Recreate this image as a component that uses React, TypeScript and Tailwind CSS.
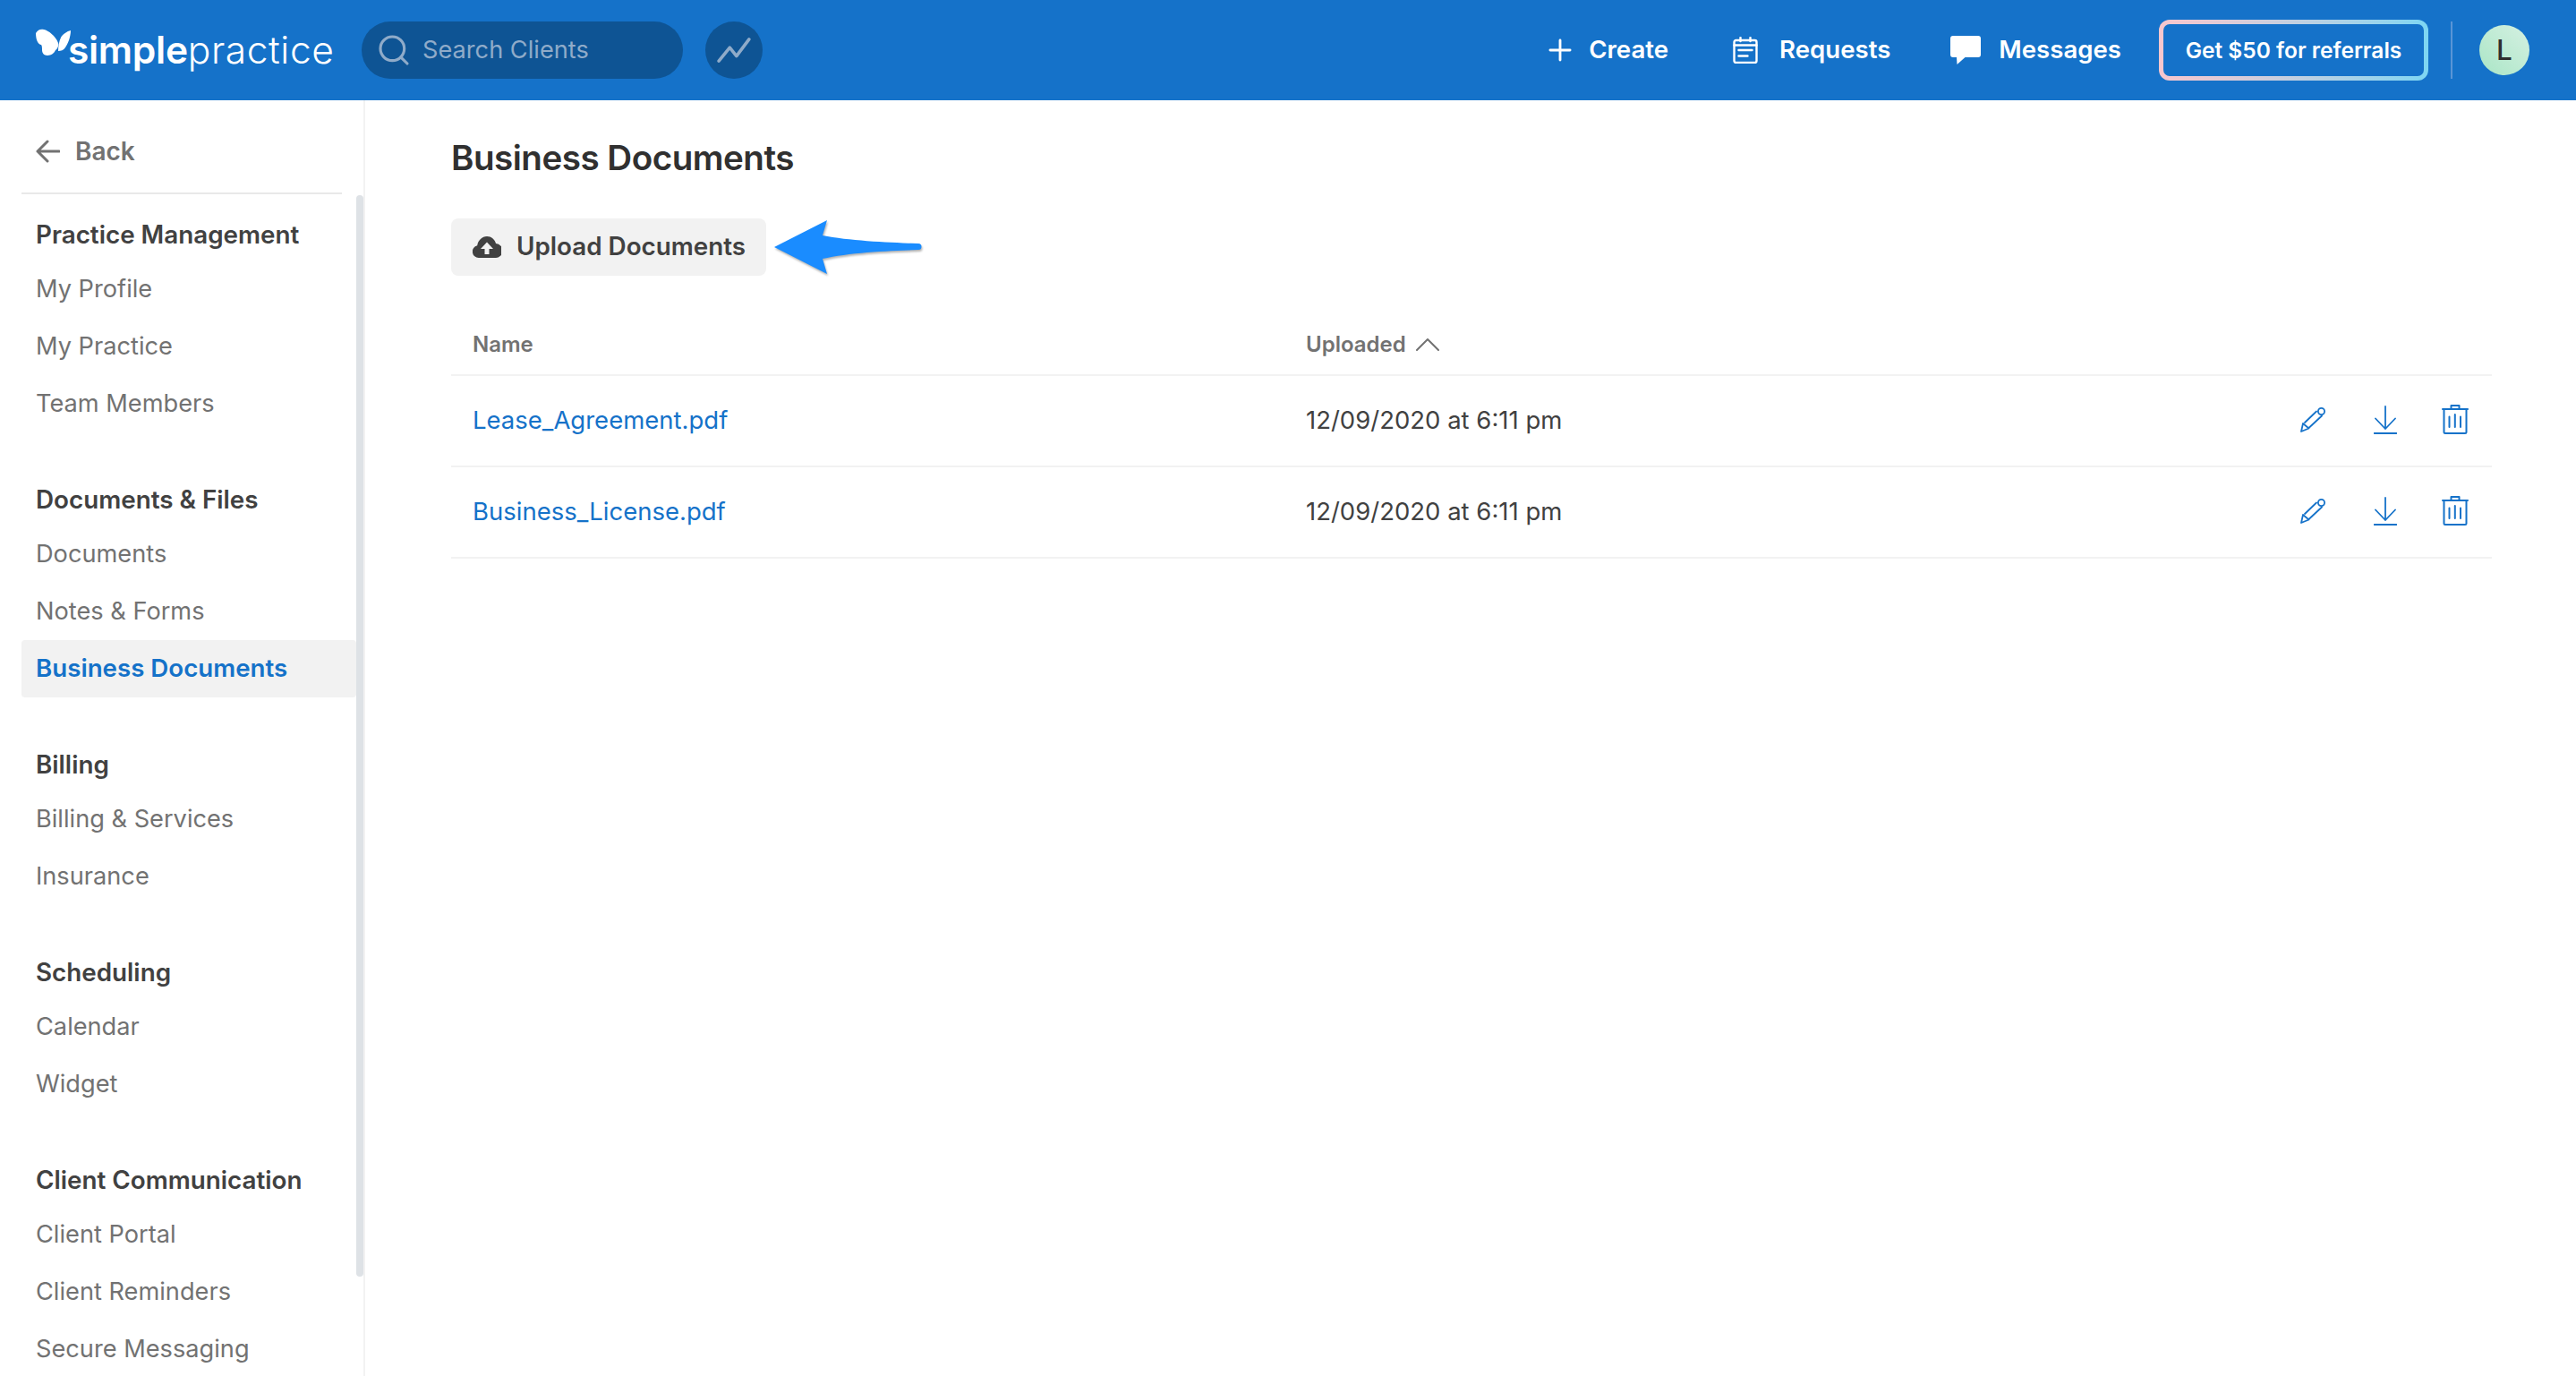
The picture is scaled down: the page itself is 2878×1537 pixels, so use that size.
import { Plus, Search } from "lucide-react";

const navGroups = [
  {
    title: "Practice Management",
    items: ["My Profile", "My Practice", "Team Members"],
  },
  {
    title: "Documents & Files",
    items: ["Documents", "Notes & Forms", "Business Documents"],
  },
  { title: "Billing", items: ["Billing & Services", "Insurance"] },
  { title: "Scheduling", items: ["Calendar", "Widget"] },
  {
    title: "Client Communication",
    items: ["Client Portal", "Client Reminders", "Secure Messaging"],
  },
];

const files = [
  { name: "Lease_Agreement.pdf", uploaded: "12/09/2020 at 6:11 pm" },
  { name: "Business_License.pdf", uploaded: "12/09/2020 at 6:11 pm" },
];

function Butterfly() {
  return (
    <svg viewBox="0 0 40 30" className="mt-[8px] w-[40px] h-[30px] shrink-0 fill-white">
      <path d="M0 5C2 1 6 0 9 1c5 1 13 7 16 15 1 3-1 7-3 8-1 3-5 6-9 6-4 0-6-3-6-6 0-2 0-5-1-6-3 0-6-5-6-13z" />
      <path d="M39 2c-4 1-9 4-11 8-2 4-3 10-3 15 3 0 6-1 8-4 3-4 6-12 6-19z" />
    </svg>
  );
}

function RequestsIcon() {
  return (
    <svg viewBox="0 0 28 30" className="w-[28px] h-[30px] fill-none stroke-white stroke-[2.4]" strokeLinecap="round">
      <rect x="1.500" y="4" width="25" height="25" rx="2" />
      <path d="M8.500 1v4M19.500 1v4M1.500 9.500h25M6.500 15h15M6.500 21.500h10" />
    </svg>
  );
}

function MessageIcon() {
  return (
    <svg viewBox="0 0 34 32" className="w-[34px] h-[32px] fill-white">
      <path d="M3 0h28a3 3 0 0 1 3 3v18a3 3 0 0 1-3 3H16.500L7.500 32l-.5-8H3a3 3 0 0 1-3-3V3a3 3 0 0 1 3-3z" />
    </svg>
  );
}

function TrendIcon() {
  return (
    <svg viewBox="0 0 40 32" className="w-[38px] h-[30px] fill-none stroke-[#8fabc9] stroke-[3.8]" strokeLinecap="round" strokeLinejoin="round">
      <path d="M2 29 15 13l8 10L38 3" />
    </svg>
  );
}

function BackArrow() {
  return (
    <svg viewBox="0 0 27 26" className="w-[27px] h-[26px] fill-none stroke-[#727272] stroke-[3]" strokeLinecap="round" strokeLinejoin="round">
      <path d="M26 13H2M13 2 2 13l11 11" />
    </svg>
  );
}

function SortChevron() {
  return (
    <svg viewBox="0 0 26 14" className="w-[26px] h-[14px] fill-none stroke-[#727272] stroke-[2]" strokeLinecap="round" strokeLinejoin="round">
      <path d="M1 13 13 1l12 12" />
    </svg>
  );
}

function CloudUpload() {
  return (
    <svg viewBox="0 0 32 24" className="w-[32px] h-[24px]">
      <path
        className="fill-[#414141]"
        d="M7 24a7 7 0 0 1-1.800-13.800C6.200 4.300 10.600 0 16 0c4.800 0 8.900 3.400 10 8a8 8 0 0 1-1 16z"
      />
      <path className="fill-[#f2f2f2]" d="M16 6.500 23 14h-4.500v6h-5v-6H9z" />
    </svg>
  );
}

function PencilIcon() {
  return (
    <svg viewBox="0 0 28 28" className="w-[28px] h-[28px] fill-none stroke-[#1572c9] stroke-[1.8]" strokeLinecap="round" strokeLinejoin="round">
      <circle cx="23.500" cy="4.500" r="3.600" />
      <path d="M5 17 18 4.500M10 22.500 24 9.500M1 27l2-9 6.500 5.500z" />
    </svg>
  );
}

function DownloadIcon() {
  return (
    <svg viewBox="0 0 26 32" className="w-[26px] h-[32px] fill-none stroke-[#1572c9] stroke-[1.8]" strokeLinecap="round" strokeLinejoin="round">
      <path d="M13 1v25M2 14.500l11 11.500 11-11.500M0.500 31h25" />
    </svg>
  );
}

function TrashIcon() {
  return (
    <svg viewBox="0 0 30 33" className="w-[30px] h-[33px] fill-none stroke-[#1572c9] stroke-[2]" strokeLinecap="round" strokeLinejoin="round">
      <path d="M1 5h28M2.500 5v25.500a1.500 1.500 0 0 0 1.500 1.500h22a1.500 1.500 0 0 0 1.500-1.500V5M10.500 5V1h9v4M8.500 13.500V25M14.800 11V25M21 13.500V25" />
    </svg>
  );
}

export default function App() {
  return (
    <div className="h-screen flex flex-col overflow-hidden bg-white font-['Inter',sans-serif] text-[#414141]">
      <header className="h-[112px] shrink-0 flex items-center bg-[#1572c9] pl-[40px] pr-[52px] text-white">
        <div className="w-[364px] flex items-start pb-[4px]">
          <Butterfly />
          <span className="-ml-[4px] mt-[4px] text-[42.5px] leading-[56px] tracking-[-0.3px]">
            <span className="font-semibold">simple</span>
            <span className="font-light tracking-[0.6px]">practice</span>
          </span>
        </div>
        <div className="w-[359px] h-[64px] flex items-center gap-[12px] pl-[16px] rounded-full bg-[#0e5494] text-[#8fabc9]">
          <Search size={40} strokeWidth={1.9} />
          <span className="text-[27.2px]">Search Clients</span>
        </div>
        <div className="ml-[25px] size-[64px] flex items-center justify-center rounded-full bg-[#0e5494]">
          <TrendIcon />
        </div>
        <nav className="ml-auto flex items-center text-[27.6px] font-semibold">
          <div className="flex items-center gap-[13px]">
            <Plus size={38} strokeWidth={1.8} />
            <span>Create</span>
          </div>
          <div className="ml-[72px] flex items-center gap-[24px]">
            <RequestsIcon />
            <span>Requests</span>
          </div>
          <div className="ml-[67px] flex items-center gap-[20px]">
            <MessageIcon />
            <span>Messages</span>
          </div>
          <div className="ml-[42px] w-[301px] h-[68px] p-[5px] rounded-[12px] bg-linear-to-r from-[#f8c6cd] to-[#7dd6f3]">
            <div className="h-full flex items-center justify-center rounded-[7px] bg-[#1572c9] text-[24.5px]">
              Get $50 for referrals
            </div>
          </div>
          <div className="ml-[25px] w-[2px] h-[64px] bg-[#5a95d6]" />
          <div className="ml-[30px] size-[56px] flex items-center justify-center rounded-full bg-linear-to-tr from-[#a9e6c6] to-[#d5f0e2] text-[#2e2e2e] text-[31.5px] font-medium">
            L
          </div>
        </nav>
      </header>

      <div className="flex-1 flex min-h-0">
        <aside className="relative w-[408px] shrink-0 overflow-hidden border-r-2 border-[#f2f2f2]">
          <div className="mx-[24px] h-[105px] flex items-center gap-[17px] border-b-2 border-[#e9e9e9] pl-[16px] pt-[11px] text-[28px] font-semibold text-[#727272]">
            <BackArrow />
            <span>Back</span>
          </div>
          <div className="pl-[24px] pr-[8px] pt-[18px] flex flex-col gap-[48px]">
            {navGroups.map((group) => (
              <div key={group.title}>
                <div className="h-[56px] flex items-center pl-[16px] text-[27.8px] font-semibold text-[#414141]">
                  {group.title}
                </div>
                {group.items.map((item) => {
                  const active = item === "Business Documents";
                  return (
                    <div
                      key={item}
                      className={
                        active
                          ? "h-[64px] flex items-center pl-[16px] rounded-[4px] bg-[#f2f2f2] text-[27.7px] font-semibold text-[#1572c9]"
                          : "h-[64px] flex items-center pl-[16px] text-[27.2px] text-[#727272]"
                      }
                    >
                      {item}
                    </div>
                  );
                })}
              </div>
            ))}
          </div>
          <div className="absolute right-0 top-[106px] w-[8px] h-[1208px] rounded-full bg-[#dee2e6]" />
        </aside>

        <main className="flex-1 pl-[96px] pr-[94px]">
          <h1 className="pt-[36px] text-[38.6px] leading-[56px] font-semibold tracking-[-0.5px] text-[#303030]">
            Business Documents
          </h1>
          <button className="mt-[40px] w-[352px] h-[64px] flex items-center gap-[17px] pl-[24px] rounded-[8px] bg-[#f2f2f2] text-[27.8px] font-semibold text-[#414141]">
            <CloudUpload />
            <span>Upload Documents</span>
          </button>

          <div className="mt-[46px] h-[66px] flex items-center pb-[3px] border-b-2 border-[#f2f2f2] text-[24px] font-semibold text-[#727272]">
            <div className="w-[955px] pl-[24px]">Name</div>
            <div className="flex items-center gap-[11px]">
              <span>Uploaded</span>
              <SortChevron />
            </div>
          </div>
          {files.map((file) => (
            <div
              key={file.name}
              className="h-[102px] flex items-center border-b-2 border-[#f2f2f2] text-[27.5px]"
            >
              <div className="w-[955px] pl-[24px] text-[#1572c9]">{file.name}</div>
              <div className="text-[#414141]">{file.uploaded}</div>
              <div className="ml-auto mr-[26px] mb-[3px] flex items-center">
                <PencilIcon />
                <span className="ml-[54px]"><DownloadIcon /></span>
                <span className="ml-[50px]"><TrashIcon /></span>
              </div>
            </div>
          ))}
        </main>
      </div>

      {/* annotation arrow on top of the screenshot */}
      <svg viewBox="0 0 166 62" className="absolute left-[864px] top-[245px] w-[166px] h-[62px] fill-[#1a8cff] drop-shadow-[1px_2px_1px_rgba(0,0,0,0.3)]">
        <path d="M1 31 60 1 55 18C85 24 130 26 162 27a3.500 3.500 0 0 1 0 7C130 35 85 37 55 44l5 17z" />
      </svg>
    </div>
  );
}
